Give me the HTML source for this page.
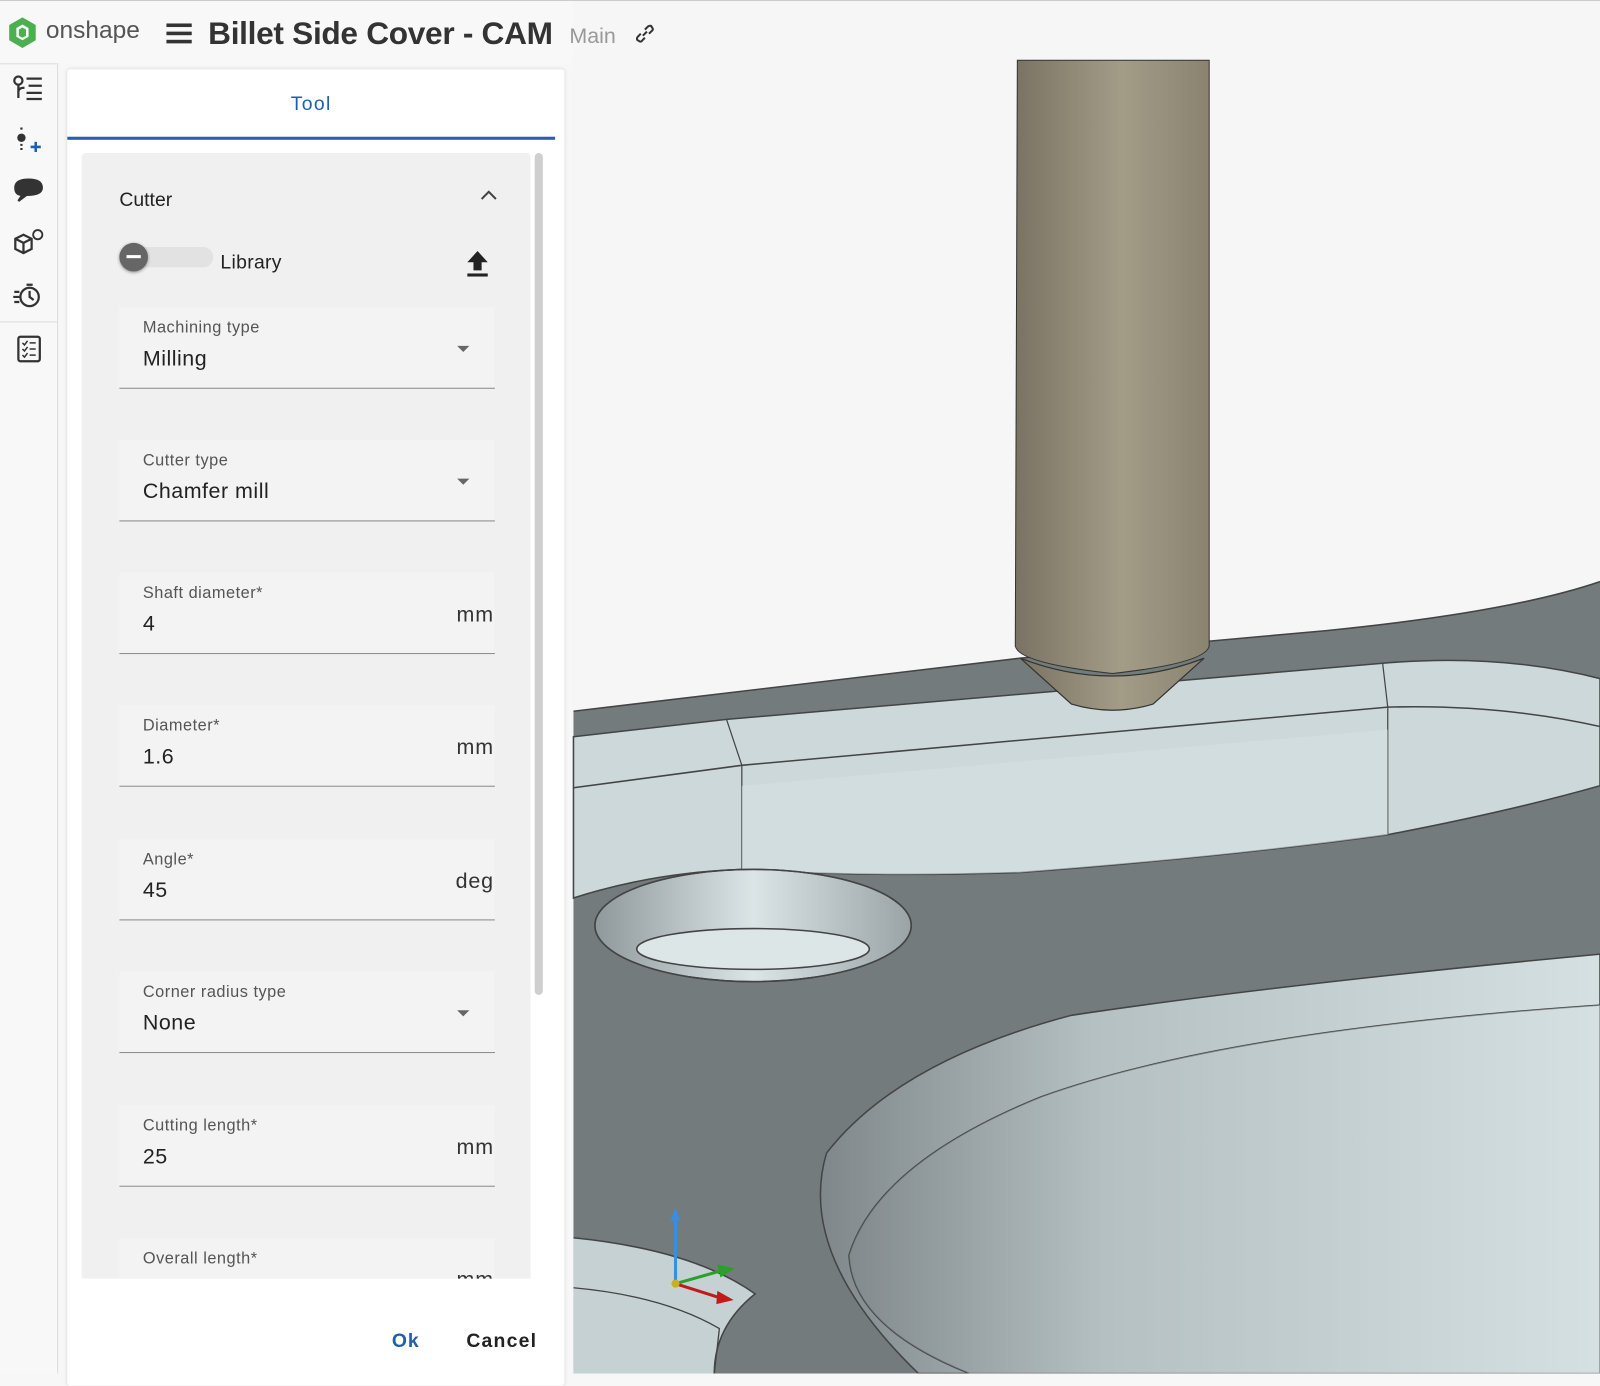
<!DOCTYPE html>
<html><head><meta charset="utf-8"><style>
html,body{margin:0;padding:0;width:1600px;height:1373px;overflow:hidden;background:#f7f7f7;font-family:"Liberation Sans",sans-serif}
#w{position:absolute;left:0;top:0;width:1568px;height:1346px;transform:scale(1.020408);transform-origin:0 0}
.a{position:absolute}
.field{position:absolute;left:117px;width:368px;height:80px;background:#f3f3f3;border-bottom:1.5px solid #8a8a8a;box-sizing:border-box}
.field .l{position:absolute;left:23px;top:12px;font-size:16px;color:#555;letter-spacing:.5px}
.field .v{position:absolute;left:23px;top:39px;font-size:21px;color:#222;letter-spacing:.5px}
.field .u{position:absolute;right:1px;top:30px;font-size:21px;color:#333;letter-spacing:.8px}
.field .d{position:absolute;left:331px;top:38px;width:0;height:0;border-left:6px solid transparent;border-right:6px solid transparent;border-top:6px solid #666}
</style></head><body><div id="w">
<svg class="a" style="left:0;top:0" width="1568" height="1346" viewBox="0 0 1568 1346">
<defs>
<linearGradient id="cyl" x1="0" x2="1"><stop offset="0" stop-color="#7a7363"/><stop offset=".55" stop-color="#a39c87"/><stop offset="1" stop-color="#8a8370"/></linearGradient>
<linearGradient id="pk" x1="0" x2="1"><stop offset="0" stop-color="#7f878a"/><stop offset=".35" stop-color="#b5c0c2"/><stop offset="1" stop-color="#d5e0e2"/></linearGradient>
<linearGradient id="hole" x1="0" x2="1"><stop offset="0" stop-color="#8f999c"/><stop offset=".5" stop-color="#dbe5e6"/><stop offset="1" stop-color="#9aa4a6"/></linearGradient>
<clipPath id="hc"><ellipse cx="738" cy="907" rx="155" ry="55"/></clipPath>
</defs>
<rect x="561" y="0" width="1007" height="1346" fill="#f6f6f6"/>
<path d="M562 697 L1000 645 L1300 618 Q1480 600 1568 570 L1568 1346 L562 1346Z" fill="#747b7d"/>
<path d="M562 697 L1000 645 L1300 618 Q1480 600 1568 570" fill="none" stroke="#444" stroke-width="1.5"/>
<path d="M562 722 L712 705 L1355 650 Q1470 640 1568 665 L1568 770 Q1480 795 1360 818 Q1200 840 1000 855 Q850 860 727 852 Q640 855 562 880Z" fill="#ccd8da" stroke="#444" stroke-width="1.5"/>
<path d="M562 772 L727 750 L1360 693 Q1470 690 1568 712" fill="none" stroke="#444" stroke-width="1.5"/>
<path d="M712 705 L727 750 L727 852 M1355 650 L1360 693 L1360 818" fill="none" stroke="#444" stroke-width="1.2"/>
<path d="M727 770 L1360 715 L1360 818 Q1200 840 1000 855 Q850 860 727 852Z" fill="#d6e1e2" opacity=".6"/>
<ellipse cx="738" cy="907" rx="155" ry="55" fill="url(#hole)" stroke="#444" stroke-width="1.5"/>
<ellipse cx="738" cy="930" rx="114" ry="20" fill="#dce6e7" stroke="#444" stroke-width="1.5" clip-path="url(#hc)"/>
<ellipse cx="738" cy="907" rx="155" ry="55" fill="none" stroke="#444" stroke-width="1.5"/>
<path d="M1568 935 Q1250 965 1050 995 Q880 1040 810 1130 Q780 1230 900 1346 L1568 1346Z" fill="url(#pk)" stroke="#444" stroke-width="1.5"/>
<path d="M1568 985 Q1200 1010 1020 1075 Q860 1140 832 1230 Q835 1300 950 1346" fill="none" stroke="#444" stroke-width="1.5"/>
<path d="M1568 985 Q1200 1010 1020 1075 Q860 1140 832 1230 Q835 1300 950 1346 L1568 1346Z" fill="url(#pk)" opacity=".5"/>
<path d="M562 1213 Q680 1225 740 1268 Q700 1300 700 1346 L562 1346Z" fill="#c5d1d3"/>
<path d="M562 1213 Q680 1225 740 1268 Q700 1300 700 1346" fill="none" stroke="#444" stroke-width="1.5"/>
<path d="M562 1262 Q650 1270 705 1302 L700 1346" fill="none" stroke="#444" stroke-width="1.3"/>
<line x1="662" y1="1258" x2="662" y2="1192" stroke="#3a8ee0" stroke-width="3"/>
<path d="M657 1196 L662 1184 L667 1196Z" fill="#3a8ee0"/>
<line x1="662" y1="1258" x2="708" y2="1245" stroke="#2aa02a" stroke-width="3"/>
<path d="M703 1239 L720 1243 L706 1252Z" fill="#2aa02a"/>
<line x1="662" y1="1258" x2="706" y2="1272" stroke="#c01a1a" stroke-width="3"/>
<path d="M703 1265 L719 1274 L702 1278Z" fill="#c01a1a"/>
<circle cx="662" cy="1258" r="4" fill="#c8b020"/>
<path d="M1000 645 Q1090 680 1180 645 L1130 690 Q1090 702 1050 690Z" fill="url(#cyl)" stroke="#333" stroke-width="1.2"/>
<path d="M997 59 L1185 59 L1185 633 Q1182 650 1090 660 Q998 650 995 633Z" fill="url(#cyl)" stroke="#333" stroke-width="1"/>
</svg>
<div class="a" style="left:0;top:0;width:561px;height:62px;background:#f8f8f8"></div>
<div class="a" style="left:0;top:0;width:1568px;height:1px;background:#ccc"></div>
<svg class="a" style="left:7px;top:16px" width="30" height="32" viewBox="0 0 30 32"><path d="M15 1 L28 8.5 L28 23.5 L15 31 L2 23.5 L2 8.5Z" fill="#4caf50"/><path d="M15 8 L21 11.5 L21 20 L15 23.5 L9 20 L9 11.5Z" fill="#f8f8f8"/><path d="M15 11 L18.5 13 L18.5 19 L15 21 L11.5 19 L11.5 13Z" fill="#4caf50"/></svg>
<div class="a" style="left:45px;top:16px;font-size:24px;color:#555">onshape</div>
<svg class="a" style="left:163px;top:22px" width="25" height="22"><rect y="1" width="25" height="3.5" fill="#333"/><rect y="9" width="25" height="3.5" fill="#333"/><rect y="17" width="25" height="3.5" fill="#333"/></svg>
<div class="a" style="left:204px;top:15px;font-size:31px;font-weight:bold;color:#333;letter-spacing:-.3px">Billet Side Cover - CAM</div>
<div class="a" style="left:558px;top:24px;font-size:21px;color:#999">Main</div>
<svg class="a" style="left:621px;top:22px" width="22" height="22" viewBox="0 0 22 22" fill="none" stroke="#333" stroke-width="2"><path d="M9 13 L13 9"/><path d="M7 11 L4 14 Q2 17 5 18 Q7 20 9 17 L11 15"/><path d="M11 7 L14 4 Q17 2 18 5 Q20 7 17 9 L15 11"/></svg>
<div class="a" style="left:0;top:62px;width:57px;height:1284px;background:#f8f8f8;border-right:1px solid #ddd;border-top:1px solid #ddd;box-sizing:border-box"></div>
<div class="a" style="left:0;top:315px;width:57px;height:1px;background:#ddd"></div>
<svg class="a" style="left:12px;top:72px" width="32" height="290" viewBox="0 0 32 290" fill="none" stroke="#333" stroke-width="2.2">
<circle cx="6" cy="7" r="4"/><path d="M6 11 V24 M6 18 Q6 14 12 14"/><path d="M14 5 H29 M16 12 H29 M14 19 H29 M14 25 H29"/>
<circle cx="9" cy="63" r="3" fill="#333"/><path d="M9 53 V56 M9 69 V76" stroke-dasharray="2 2"/><path d="M18 72 H28 M23 67 V77" stroke="#1f5fb0" stroke-width="2.5"/>
<path d="M16 104 Q3 104 3 112 Q3 119 10 119 L6 125 L14 119 Q29 119 29 112 Q29 104 16 104Z" fill="#333"/>
<path d="M3 162 L11 158 L19 162 L19 172 L11 176 L3 172Z M3 162 L11 166 L19 162 M11 166 V176"/><circle cx="25" cy="158" r="4.5" stroke-width="1.8"/>
<circle cx="17" cy="219" r="9"/><path d="M14 207 H20 M17 213 V219 L21 222 M2 214 H7 M1 219 H7 M2 224 H7"/>
<rect x="6" y="258" width="21" height="24" rx="2"/><path d="M10 264 L12 266 L15 262 M17 264 H23 M10 270 L12 272 L15 268 M17 270 H23 M10 276 L12 278 L15 274 M17 276 H23" stroke-width="1.5"/>
</svg>
<div class="a" style="left:66px;top:68px;width:487px;height:1290px;background:#fff;border-radius:3px;box-shadow:0 0 4px rgba(0,0,0,.12)"></div>
<div class="a" style="left:66px;top:92px;width:478px;text-align:center;font-size:19px;color:#1f5fb0;letter-spacing:1.3px">Tool</div>
<div class="a" style="left:66px;top:134px;width:478px;height:3px;background:#2a5db0"></div>
<div class="a" style="left:80px;top:150px;width:440px;height:1103px;background:#f0f0f0;border-radius:4px 4px 0 0;overflow:hidden">
<div class="a" style="left:37px;top:36px;font-size:19px;color:#222">Cutter</div>
<svg class="a" style="left:390px;top:35px" width="18" height="12"><path d="M2 10 L9 3 L16 10" fill="none" stroke="#444" stroke-width="2"/></svg>
<div class="a" style="left:37px;top:92px;width:92px;height:20px;border-radius:10px;background:#e2e2e2"></div>
<div class="a" style="left:37px;top:88px;width:28px;height:28px;border-radius:50%;background:#666;box-shadow:0 1px 3px rgba(0,0,0,.4)"></div>
<div class="a" style="left:44px;top:100px;width:14px;height:3px;background:#fff"></div>
<div class="a" style="left:136px;top:97px;font-size:19px;color:#222;letter-spacing:.3px">Library</div>
<svg class="a" style="left:376px;top:95px" width="24" height="28"><path d="M12 1 L22 12 H16 V20 H8 V12 H2Z" fill="#222"/><rect x="2" y="23" width="20" height="3" fill="#222"/></svg>
</div>
<div class="a" style="left:524px;top:150px;width:8px;height:825px;background:#cfcfcf;border-radius:4px"></div>
<div class="field" style="top:301px"><div class="l">Machining type</div><div class="v">Milling</div><div class="d"></div></div>
<div class="field" style="top:431px"><div class="l">Cutter type</div><div class="v">Chamfer mill</div><div class="d"></div></div>
<div class="field" style="top:561px"><div class="l">Shaft diameter*</div><div class="v">4</div><div class="u">mm</div></div>
<div class="field" style="top:691px"><div class="l">Diameter*</div><div class="v">1.6</div><div class="u">mm</div></div>
<div class="field" style="top:822px"><div class="l">Angle*</div><div class="v">45</div><div class="u">deg</div></div>
<div class="field" style="top:952px"><div class="l">Corner radius type</div><div class="v">None</div><div class="d"></div></div>
<div class="field" style="top:1083px"><div class="l">Cutting length*</div><div class="v">25</div><div class="u">mm</div></div>
<div class="a" style="left:117px;top:1213px;width:368px;height:40px;overflow:hidden"><div class="field" style="left:0;top:0"><div class="l">Overall length*</div><div class="u">mm</div></div></div>
<div class="a" style="left:384px;top:1304px;font-size:19px;font-weight:bold;color:#1f5fb0;letter-spacing:1px">Ok</div>
<div class="a" style="left:457px;top:1304px;font-size:19px;font-weight:bold;color:#222;letter-spacing:1.2px">Cancel</div>
</div></body></html>
